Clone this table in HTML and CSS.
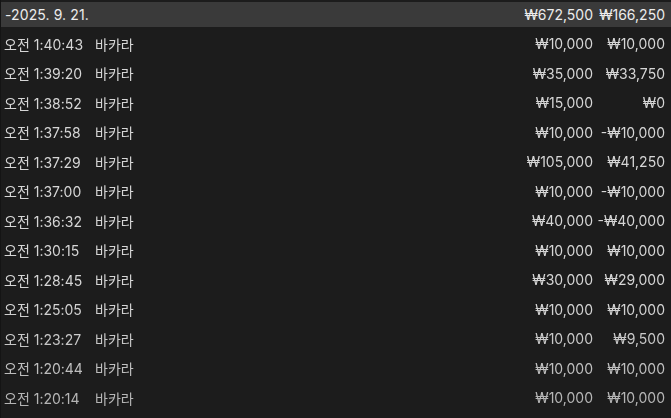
FILE: index.html
```html
<!DOCTYPE html>
<html>
  <head>
    <title>베팅 내역</title>
    <link rel="stylesheet" href="styles.css">
  </head>
  <body>
    <div class="history">
      <div class="day-header">
        <span class="day-date">-2025. 9. 21.</span>
        <span class="amount">₩672,500</span>
        <span class="profit">₩166,250</span>
      </div>
      <div class="rows">
        <div class="row"><span class="time">오전 1:40:43</span><span class="game">바카라</span><span class="amount">₩10,000</span><span class="profit">₩10,000</span></div>
        <div class="row"><span class="time">오전 1:39:20</span><span class="game">바카라</span><span class="amount">₩35,000</span><span class="profit">₩33,750</span></div>
        <div class="row"><span class="time">오전 1:38:52</span><span class="game">바카라</span><span class="amount">₩15,000</span><span class="profit">₩0</span></div>
        <div class="row"><span class="time">오전 1:37:58</span><span class="game">바카라</span><span class="amount">₩10,000</span><span class="profit">-₩10,000</span></div>
        <div class="row"><span class="time">오전 1:37:29</span><span class="game">바카라</span><span class="amount">₩105,000</span><span class="profit">₩41,250</span></div>
        <div class="row"><span class="time">오전 1:37:00</span><span class="game">바카라</span><span class="amount">₩10,000</span><span class="profit">-₩10,000</span></div>
        <div class="row"><span class="time">오전 1:36:32</span><span class="game">바카라</span><span class="amount">₩40,000</span><span class="profit">-₩40,000</span></div>
        <div class="row"><span class="time">오전 1:30:15</span><span class="game">바카라</span><span class="amount">₩10,000</span><span class="profit">₩10,000</span></div>
        <div class="row"><span class="time">오전 1:28:45</span><span class="game">바카라</span><span class="amount">₩30,000</span><span class="profit">₩29,000</span></div>
        <div class="row"><span class="time">오전 1:25:05</span><span class="game">바카라</span><span class="amount">₩10,000</span><span class="profit">₩10,000</span></div>
        <div class="row"><span class="time">오전 1:23:27</span><span class="game">바카라</span><span class="amount">₩10,000</span><span class="profit">₩9,500</span></div>
        <div class="row"><span class="time">오전 1:20:44</span><span class="game">바카라</span><span class="amount">₩10,000</span><span class="profit">₩10,000</span></div>
        <div class="row"><span class="time">오전 1:20:14</span><span class="game">바카라</span><span class="amount">₩10,000</span><span class="profit">₩10,000</span></div>
      </div>
    </div>
  </body>
</html>
```

FILE: styles.css
```css
html, body {
  margin: 0;
  height: 100%;
  background: #1c1c1c;
  overflow: hidden;
}
body {
  font-family: "Inter", "Noto Sans CJK KR", sans-serif;
  font-size: 14px;
  color: #d6d6d6;
}
.history {
  padding-top: 2px;
  border-left: 1px solid #141414;
  height: 100%;
  box-sizing: border-box;
}
.day-header {
  display: grid;
  grid-template-columns: 1fr auto 72px;
  align-items: center;
  height: 25px;
  padding: 0 6px 0 4px;
  background: #3a3a3a;
  color: #ececec;
}
.rows {
  padding-top: 2px;
  -webkit-mask-image: linear-gradient(to bottom, #000 70%, rgba(0, 0, 0, 0.8) 100%);
  mask-image: linear-gradient(to bottom, #000 70%, rgba(0, 0, 0, 0.8) 100%);
}
.row {
  display: grid;
  grid-template-columns: 91px 1fr auto 72px;
  align-items: center;
  height: 29.5px;
  padding: 0 6px 0 3px;
}
.amount,
.profit {
  text-align: right;
}
.day-header .day-date {
  letter-spacing: 0.1px;
}
```
